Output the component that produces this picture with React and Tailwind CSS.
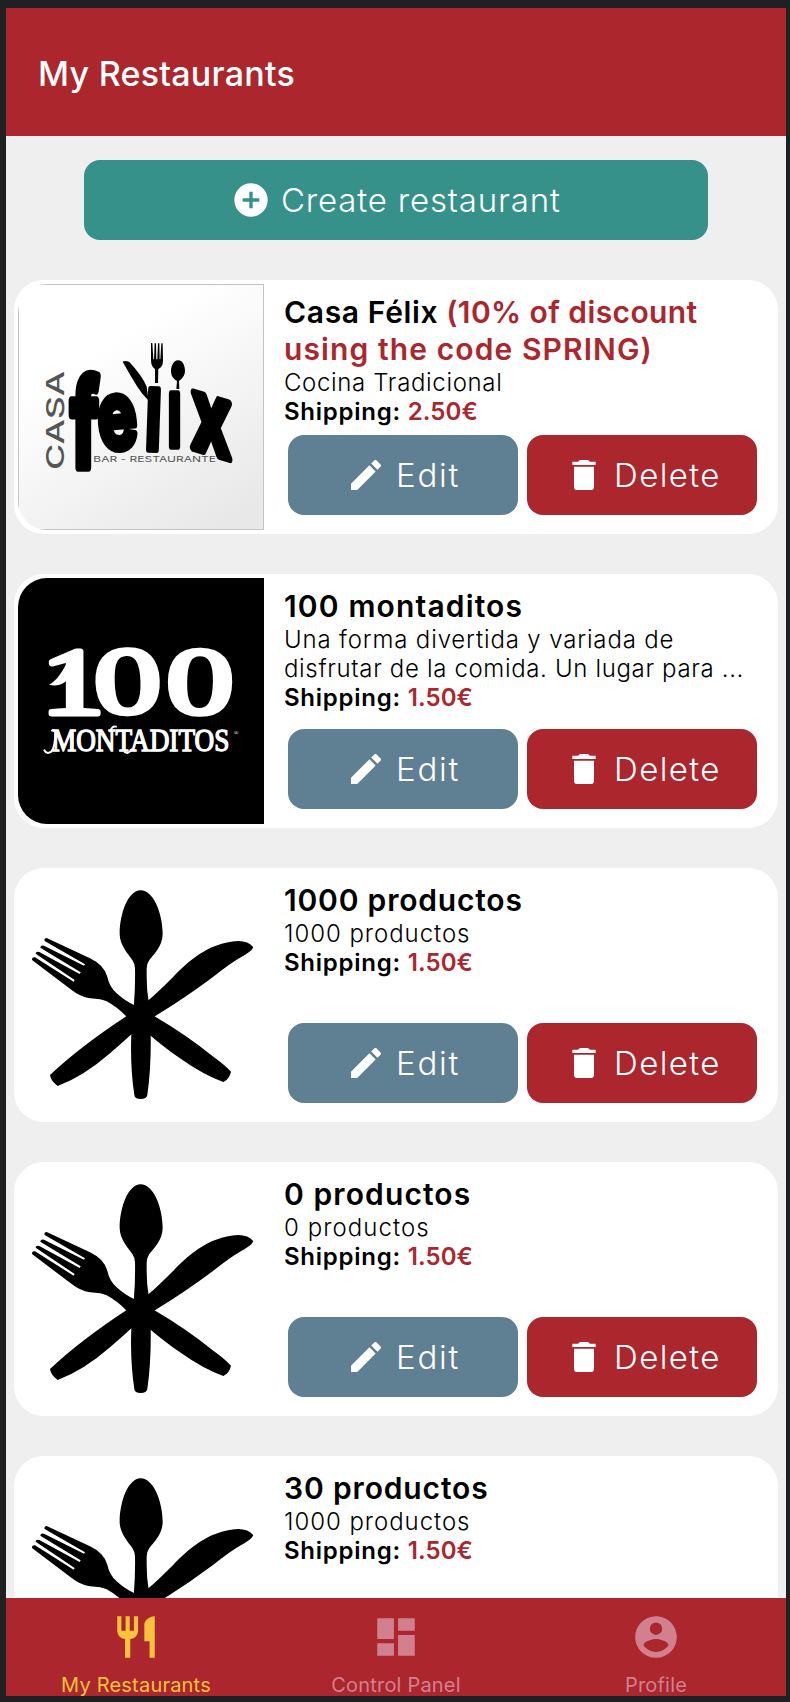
import React from "react";

const PATHS = {
  plus: "M17,13H13V17H11V13H7V11H11V7H13V11H17M12,2A10,10 0 0,0 2,12A10,10 0 0,0 12,22A10,10 0 0,0 22,12A10,10 0 0,0 12,2Z",
  pencil: "M20.71,7.04C21.1,6.65 21.1,6 20.71,5.63L18.37,3.29C18,2.9 17.35,2.9 16.96,3.29L15.12,5.12L18.87,8.87M3,17.25V21H6.75L17.81,9.93L14.06,6.18L3,17.25Z",
  trash: "M19,4H15.5L14.5,3H9.5L8.5,4H5V6H19M6,19A2,2 0 0,0 8,21H16A2,2 0 0,0 18,19V7H6V19Z",
  cutlery: "M11,9H9V2H7V9H5V2H3V9C3,11.12 4.66,12.84 6.75,12.97V22H9.25V12.97C11.34,12.84 13,11.12 13,9V2H11V9M16,6V14H18.5V22H21V2C18.24,2 16,4.24 16,6Z",
  dashboard: "M13,3V9H21V3M13,21H21V11H13M3,21H11V15H3M3,13H11V3H3V13Z",
  account: "M12,19.2C9.5,19.2 7.29,17.92 6,16C6.03,14 10,12.9 12,12.9C14,12.9 17.97,14 18,16C16.71,17.92 14.5,19.2 12,19.2M12,5A3,3 0 0,1 15,8A3,3 0 0,1 12,11A3,3 0 0,1 9,8A3,3 0 0,1 12,5M12,2A10,10 0 0,0 2,12A10,10 0 0,0 12,22A10,10 0 0,0 22,12C22,6.47 17.5,2 12,2Z",
};

function Icon({ name, className }) {
  return (
    <svg viewBox="0 0 24 24" fill="currentColor" className={`shrink-0 ${className}`}>
      <path d={PATHS[name]} />
    </svg>
  );
}

function FelixLogo() {
  return (
    <svg viewBox="54 42 738 738" className="size-full">
      <defs>
        <linearGradient id="paper" x1="0.2" y1="0" x2="0.8" y2="1">
          <stop offset="0.25" stopColor="#ffffff" />
          <stop offset="1" stopColor="#e8e8e8" />
        </linearGradient>
      </defs>
      <rect x="55.5" y="43.5" width="735" height="735" fill="url(#paper)" stroke="#c4c4c4" strokeWidth="3" />
      <text transform="translate(193 600) rotate(-90)" fontFamily="Inter" fontWeight="500" fontSize="72" fill="#555" textLength="298" lengthAdjust="spacingAndGlyphs">CASA</text>
      <g fontFamily="Inter" fontWeight="700" fontSize="200" stroke="#000" strokeWidth="16" strokeLinejoin="round">
        <text transform="translate(212 592) scale(1.05 1.82)">f</text>
        <text transform="translate(301 540) rotate(-5) scale(0.98 1.42)">e</text>
        <text transform="translate(434 538) rotate(2) scale(0.85 1.24)">l</text>
        <text transform="translate(503 527) scale(0.75 1.42)">ı</text>
        <text transform="translate(574 532) skewY(17) scale(1.03 1.52)">x</text>
      </g>
      <path d="M368 275Q376 270 388 276Q425 315 440 350L446 392Q428 375 412 350Q390 315 368 275Z" />
      <path d="M453 219H457L460 268H462L464 220H468L469 268H472L474 220H478L479 268H481L484 220H488L489 272Q489 290 475 297L474 339H465L465 297Q454 290 453 272Z" />
      <path d="M534 271C550 271 555 290 555 303C554 320 544 327 537 333L538 357H529L531 333C522 327 513 320 513 303C513 290 520 271 534 271Z" />
      <text x="280" y="575" fontFamily="Inter" fontSize="24" fill="#555" textLength="368" lengthAdjust="spacingAndGlyphs">BAR - RESTAURANTE</text>
    </svg>
  );
}

function MontaditosLogo() {
  return (
    <svg viewBox="54 54 738 738" className="size-full bg-black" fill="#fff" fontFamily="Liberation Serif">
      <g fontSize="285" stroke="#fff" strokeWidth="15" strokeLinejoin="round">
        <text transform="translate(122 462) scale(1.35 1)">1</text>
        <text transform="translate(285 462) rotate(-2) scale(1.42 1)">0</text>
        <text transform="translate(497 458) rotate(1) scale(1.42 1)">0</text>
      </g>
      <path d="M210 290C190 330 172 362 147 374C175 382 200 370 222 335Z" />
      <text x="156" y="573" fontSize="92" stroke="#fff" strokeWidth="4" textLength="532" lengthAdjust="spacingAndGlyphs">MONTADITOS</text>
      <g fill="none" stroke="#fff" strokeWidth="6" strokeLinecap="round">
        <path d="M133 571Q140 584 154 575Q166 560 166 515Q160 508 156 512" />
        <path d="M330 514Q337 496 348 500" />
        <path d="M374 576Q385 584 395 568" />
      </g>
      <text x="701" y="526" fontSize="19">®</text>
    </svg>
  );
}

function CutleryPicture() {
  return (
    <svg viewBox="54 36 738 738" className="size-full">
      <path d="M422 91C460 91 488 160 488 222C488 258 460 285 448 300Q440 312 440 325L440 350Q440 390 446 425L452 520Q454 620 442 705Q440 717 422 717Q404 717 403 705Q390 620 394 520L402 430Q406 380 405 325Q405 312 397 300C385 283 359 255 359 222C359 160 385 91 422 91Z" />
      <path d="M760 262Q745 243 715 243C620 248 560 310 520 350Q470 400 446 420L380 468Q240 560 150 645Q152 662 173 678Q250 650 330 580Q370 545 395 522L466 468Q560 410 640 350Q690 310 720 293Q755 275 760 262Z" />
      <path d="M140 234L270 295Q312 315 322 350Q328 380 350 400Q375 423 402 435L466 470Q560 525 640 590Q675 615 693 635Q688 658 670 666Q610 645 540 595Q490 560 452 527L380 470Q350 440 320 424Q305 417 270 415Q240 410 215 390L97 301Q93 291 105 292L221 365L224 360L107 281Q107 273 118 276L239 342L242 337L121 263Q121 255 132 257L252 317L255 313L134 243Q131 234 140 234Z" />
    </svg>
  );
}

const RESTAURANTS = [
  { name: "Casa Félix", track: "tracking-[0.65px]", promo: true, lines: [["Cocina Tradicional", "tracking-[0.65px]"]], price: "2.50€", Logo: FelixLogo },
  {
    name: "100 montaditos",
    track: "tracking-[1.15px]",
    lines: [
      ["Una forma divertida y variada de", "tracking-[0.85px]"],
      ["disfrutar de la comida. Un lugar para ...", "tracking-[0.65px]"],
    ],
    price: "1.50€",
    Logo: MontaditosLogo,
  },
  { name: "1000 productos", track: "tracking-[0.8px]", lines: [["1000 productos", "tracking-[0.95px]"]], price: "1.50€", Logo: CutleryPicture },
  { name: "0 productos", track: "tracking-[1.1px]", lines: [["0 productos", "tracking-[1.05px]"]], price: "1.50€", Logo: CutleryPicture },
  { name: "30 productos", track: "tracking-[0.85px]", lines: [["1000 productos", "tracking-[0.95px]"]], price: "1.50€", Logo: CutleryPicture },
];

function RestaurantCard({ name, track, promo, lines, price, Logo }) {
  return (
    <article className="flex h-[254px] shrink-0 rounded-[30px] bg-white p-1">
      <div className="size-[246px] shrink-0 overflow-hidden rounded-l-[29px]">
        <Logo />
      </div>
      <div className="flex min-w-0 flex-1 flex-col pt-[10px] pb-[15px] pl-5">
        <h2 className={`whitespace-nowrap text-[30px] leading-[37px] font-semibold ${track}`}>
          {name}
          {promo && (
            <span className="text-[#ab262d]">
              <span className="tracking-[0.4px]"> (10% of discount</span>
              <br />
              <span className="tracking-[1.1px]">using the code SPRING)</span>
            </span>
          )}
        </h2>
        {lines.map(([line, lineTrack]) => (
          <p key={line} className={`whitespace-nowrap text-[24px] leading-[29px] font-light ${lineTrack}`}>{line}</p>
        ))}
        <p className="text-[24px] leading-[29px] font-semibold tracking-[0.75px]">
          Shipping: <span className="tracking-[0.1px] text-[#ab262d]">{price}</span>
        </p>
        <div className="mt-auto flex gap-[9px] pl-1">
          <button className="flex h-20 w-[230px] items-center rounded-2xl bg-[#5f7f92] pl-[58px] text-[33px] font-light tracking-[1.8px] text-white">
            <Icon name="pencil" className="mr-[10px] size-10" />
            <span className="pt-[2px]">Edit</span>
          </button>
          <button className="flex h-20 w-[230px] items-center rounded-2xl bg-[#ab262d] pl-[37px] text-[33px] font-light tracking-[1.4px] text-white">
            <Icon name="trash" className="mr-[10px] size-10" />
            <span className="pt-[2px]">Delete</span>
          </button>
        </div>
      </div>
    </article>
  );
}

function Tab({ icon, label, className }) {
  return (
    <div className={`flex flex-1 flex-col items-center pt-[14px] ${className}`}>
      <Icon name={icon} className="size-[50px]" />
      <span className="mt-[11px] text-[20px] leading-6 tracking-[0.2px]">{label}</span>
    </div>
  );
}

export default function App() {
  return (
    <div className="flex h-[1702px] w-[790px] flex-col overflow-hidden bg-[#202022] pt-2 pr-1 pb-[6px] pl-[6px] font-['Inter',sans-serif] text-black">
      <header className="flex h-32 shrink-0 items-center bg-[#ab262d] pl-8">
        <h1 className="mt-[3px] text-[34px] font-medium tracking-[0.25px] text-white">My Restaurants</h1>
      </header>
      <main className="flex min-h-0 flex-1 flex-col overflow-hidden bg-[#efefef] px-2 pt-6">
        <button className="ml-[70px] flex h-20 w-[624px] shrink-0 items-center rounded-2xl bg-[#35918a] pl-[147px] text-[33px] font-light tracking-[0.85px] text-white">
          <Icon name="plus" className="mr-[10px] size-10" />
          <span className="pt-[2px]">Create restaurant</span>
        </button>
        <div className="mt-10 flex flex-col gap-10">
          {RESTAURANTS.map((r) => (
            <RestaurantCard key={r.name} {...r} />
          ))}
        </div>
      </main>
      <nav className="flex h-[98px] shrink-0 overflow-hidden bg-[#ab262d]">
        <Tab icon="cutlery" label="My Restaurants" className="text-[#fac23c]" />
        <Tab icon="dashboard" label="Control Panel" className="text-[#d2808e]" />
        <Tab icon="account" label="Profile" className="text-[#d2808e]" />
      </nav>
    </div>
  );
}
